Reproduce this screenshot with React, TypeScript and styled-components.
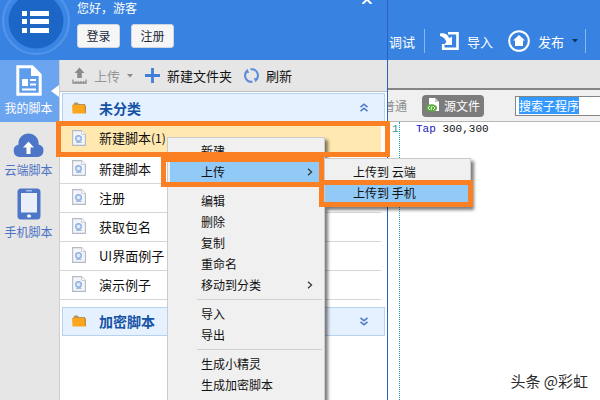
import React, { useEffect, useRef } from "react";
import styled, { createGlobalStyle } from "styled-components";

const orange = "#fb8023";
const blue = "#3883e1";

const GlobalStyle = createGlobalStyle`
  * { box-sizing: border-box; }
  body { margin: 0; overflow: hidden; }
  body, button, input { font-family: "Noto Sans CJK SC", "Noto Sans", sans-serif; font-size: 13px; }
  button { margin: 0; padding: 0; border: 0; background: none; color: inherit; text-align: left; white-space: nowrap; }
  ul { list-style: none; margin: 0; padding: 0; }
  svg { display: block; flex: none; }
`;

const Window = styled.div`
  position: relative;
  display: flex;
  height: 100vh;
  overflow: hidden;
  background: #fff;
  color: #111;
`;

const Panel = styled.aside`
  flex: 0 0 388px;
  display: flex;
  flex-direction: column;
  border-right: 1px solid #2a62bd;
  position: relative;
  z-index: 1;
`;

const PanelHeader = styled.header`
  flex: 0 0 60px;
  display: flex;
  align-items: flex-start;
  padding-left: 2px;
  gap: 7px;
  background: ${blue};
  color: #fff;
`;

const Account = styled.div`
  flex: 1;
  font-size: 12px;
  line-height: 16px;
`;

const AccountButtons = styled.div`
  display: flex;
  gap: 11px;
  margin-top: 8px;
`;

const AccountButton = styled.button`
  width: 43px;
  height: 24px;
  padding-bottom: 1px;
  border-radius: 3px;
  border: 1px solid #cfd6e2;
  background: #f6f6f6;
  color: #1b2a3c;
  font-size: 12px;
  text-align: center;
`;

const CloseButton = styled.button`
  margin-right: 14px;
`;

const PanelBody = styled.div`
  flex: 1;
  display: flex;
  min-height: 0;
`;

const Nav = styled.nav`
  flex: 0 0 60px;
  background: #e6e6e6;
  border-right: 1px solid #cfcfcf;
`;

const NavItem = styled.button<{ $active?: boolean }>`
  position: relative;
  display: flex;
  flex-direction: column;
  align-items: center;
  justify-content: flex-end;
  gap: 3px;
  width: 100%;
  height: 62px;
  padding: 0 2px 5px 0;
  font-size: 12px;
  line-height: 18px;
  background: ${(p) => (p.$active ? "#6ba4ef" : "transparent")};
  color: ${(p) => (p.$active ? "#fff" : "#4d72c4")};
`;

const NavPointer = styled.svg`
  position: absolute;
  right: 0;
  top: 25px;
`;

const Main = styled.main`
  flex: 1;
  min-width: 0;
`;

const Toolbar = styled.div`
  display: flex;
  align-items: center;
  height: 32px;
  padding-left: 12px;
  background: #e6e6e6;
  border-bottom: 1px solid #b9bec4;
`;

const ToolButton = styled.button<{ $muted?: boolean }>`
  display: flex;
  align-items: center;
  gap: 7px;
  margin-right: 12px;
  color: ${(p) => (p.$muted ? "#969696" : "#111")};
`;

const List = styled.div`
  padding: 1px 2px 0 0;
`;

const Category = styled.button<{ $spaced?: boolean }>`
  display: flex;
  align-items: center;
  gap: 13px;
  width: calc(100% - 2px);
  height: ${(p) => (p.$spaced ? 29 : 30)}px;
  margin: ${(p) => (p.$spaced ? 7 : 0)}px 0 0 2px;
  padding: 0 16px 1px 9px;
  border: 1px solid #b5d2ee;
  background: #e5f1fe;
  color: #1553a5;
  font-size: 14px;
  font-weight: 700;
`;

const CategoryName = styled.span`
  flex: 1;
`;

const Row = styled.li<{ $selected?: boolean }>`
  position: relative;
  height: ${(p) => (p.$selected ? 32 : 29)}px;
  margin-right: 4px;
  border-bottom: 1px solid ${(p) => (p.$selected ? "#ffebb4" : "#d6d6d6")};
  background: ${(p) => (p.$selected ? "#ffe9b0" : "#fff")};
`;

const RowButton = styled.button`
  display: flex;
  align-items: center;
  gap: 13px;
  width: 100%;
  height: 100%;
  padding: 0 0 2px 12px;
`;

const Count = styled.small`
  font-size: 12px;
`;

const Frame = styled.span<{ $inset: string }>`
  position: absolute;
  inset: ${(p) => p.$inset};
  z-index: 3;
  border: 5px solid ${orange};
  pointer-events: none;
`;

const Menu = styled.ul`
  position: absolute;
  left: 107px;
  top: 14px;
  z-index: 2;
  width: 158px;
  height: 290px;
  padding: 2px;
  border: 1px solid #cccccc;
  background: #f0f0f0;
  box-shadow: 3px 3px 3px rgba(0, 0, 0, 0.5);
`;

const SubMenu = styled.ul`
  position: absolute;
  left: 154px;
  top: -3px;
  width: 147px;
  padding: 2px 2px 3px 0;
  border: 1px solid #cccccc;
  background: #f0f0f0;
  box-shadow: 3px 3px 3px rgba(0, 0, 0, 0.5);
`;

const MenuItem = styled.li<{ $active?: boolean }>`
  position: relative;
  height: 21px;
  background: ${(p) => (p.$active ? "#91c9f7" : "transparent")};
`;

const MenuButton = styled.button<{ $nested?: boolean }>`
  display: flex;
  align-items: center;
  justify-content: space-between;
  width: 100%;
  height: 100%;
  padding: 0 9px 0 ${(p) => (p.$nested ? 28 : 31)}px;
  font-size: 12px;
`;

const MenuLine = styled.li`
  height: 8px;
  margin-left: 27px;
  padding-top: 4px;
  &::before {
    content: "";
    display: block;
    border-top: 1px solid #cfcfcf;
  }
`;

const Editor = styled.section`
  flex: 1;
  min-width: 0;
  display: flex;
  flex-direction: column;
`;

const EditorHeader = styled.header`
  flex: 0 0 60px;
  display: flex;
  align-items: center;
  padding-top: 22px;
  background: ${blue};
  color: #fff;
`;

const HeaderButton = styled.button`
  display: flex;
  align-items: center;
  gap: 8px;
  margin-left: 1px;
`;

const HeaderLine = styled.span<{ $after?: boolean }>`
  width: 1px;
  height: 24px;
  margin: ${(p) => (p.$after ? "0 14px 0 9px" : "0 0 0 7px")};
  background: #8bb7ef;
`;

const Publish = styled(HeaderButton)`
  margin-left: 15px;
`;

const TabStrip = styled.div`
  flex: 0 0 30px;
  background: #e6e6e6;
  border-bottom: 2px solid #858585;
`;

const EditorBar = styled.div`
  flex: 0 0 32px;
  display: flex;
  align-items: center;
  background: #f0f0f0;
  border-bottom: 1px solid #b8b8b8;
`;

const ModeTab = styled.button`
  display: flex;
  justify-content: flex-end;
  width: 19px;
  overflow: hidden;
  color: #8b8b8b;
  font-size: 12px;
`;

const SourceTab = styled.button`
  display: flex;
  align-items: center;
  gap: 4px;
  height: 22px;
  margin-left: 15px;
  padding: 0 4px;
  border-radius: 4px;
  background: #7c7c7c;
  color: #fff;
  font-size: 12px;
`;

const Search = styled.input`
  flex: 1;
  min-width: 0;
  height: 20px;
  margin-left: 31px;
  padding: 0 3px;
  border: 1px solid #858585;
  border-right: 0;
  outline: 0;
  border-radius: 0;
  background: #fff;
  color: #111;
  font-size: 12px;
  line-height: 14px;
  &::selection { background: #3399ff; color: #fff; }
`;

const Code = styled.div`
  flex: 1;
  display: flex;
  font-family: "Liberation Mono", monospace;
  font-size: 11px;
  line-height: 14px;
`;

const Gutter = styled.div`
  flex: 0 0 12px;
  padding-left: 4px;
  border-right: 1px dotted #1fa0b0;
  color: #2f9090;
`;

const Line = styled.code`
  padding-left: 16px;
  font-family: inherit;
`;

const Keyword = styled.span`
  color: #1717c0;
`;

const Credit = styled.div`
  position: absolute;
  right: 12px;
  bottom: 8px;
  font-size: 15px;
  line-height: 22px;
  color: #2a2a2a;
`;

const Caret = ({ color }: { color: string }) => (
  <svg width="6" height="4" viewBox="0 0 6 4"><path d="M0 0h6L3 3.6z" fill={color} /></svg>
);

const Arrow = () => (
  <svg width="6" height="8" viewBox="0 0 6 8"><path d="M1 .7 4.6 4 1 7.3" fill="none" stroke="#333" strokeWidth="1.2" /></svg>
);

const Logo = () => (
  <svg width="68" height="56" viewBox="0 0 68 56">
    <circle cx="34" cy="21" r="33" fill="#3b86e4" stroke="#5495ea" strokeWidth="2" />
    <circle cx="34" cy="21" r="27.5" fill="#1b66c6" />
    <path d="M20 11h5v5h-5zM20 19h5v5h-5zM20 28h5v5h-5zM28 11h19v5H28zM28 19h19v5H28zM28 28h19v5H28z" fill="#fff" />
  </svg>
);

const FolderIcon = () => (
  <svg width="14" height="12" viewBox="0 0 14 12">
    <path d="M1 3 2.5.5h3L7 2h6v3H1z" fill="#b39462" />
    <path d="M0 3h12.5L14 5l-.5 6.5h-13z" fill="#fba61d" />
    <path d="M12.5 2 14 4v7l-1 .5z" fill="#b98c3e" />
  </svg>
);

const FileIcon = () => (
  <svg width="14" height="16" viewBox="0 0 14 16">
    <path d="M.6.6h9l3.8 3.8v11H.6z" fill="#f3f5f9" stroke="#b4b9c6" strokeWidth="1.1" />
    <path d="M9.6.6v3.8h3.8" fill="#fff" stroke="#c5cad6" />
    <circle cx="6.5" cy="8.500" r="2.800" fill="#dceafb" stroke="#8fb0e2" strokeWidth="1.400" />
    <path d="M4 12.300h5.500" stroke="#8fb0e2" />
  </svg>
);

const Chevrons = ({ down }: { down?: boolean }) => (
  <svg width="8" height="9" viewBox="0 0 8 9">
    <path
      d={down ? "m.5.8 3.5 3 3.5-3M.5 4.8l3.5 3 3.5-3" : "m.5 4.2 3.5-3 3.5 3m-7 4 3.5-3 3.5 3"}
      fill="none" stroke="#4c78c6" strokeWidth="1.6"
    />
  </svg>
);

const ScriptIcon = () => (
  <svg width="26" height="31" viewBox="0 0 26 31">
    <path d="M1.8 1.8h14.5l7.9 8v19.4H1.8z" fill="#5f9cec" stroke="#fff" strokeWidth="3" />
    <path d="M15 1v10h10z" fill="#fff" />
    <path d="M6 14h6v7H6zM14 14h6v2h-6zM14 18.500h6v2h-6zM6 23.500h14v2H6z" fill="#fff" />
  </svg>
);

const CloudIcon = () => (
  <svg width="31" height="25" viewBox="0 0 31 25">
    <path d="M6.500 24a6.300 6.300 0 0 1-1-12.400C5 4.500 10 .5 15.500.5S26 4.500 25.700 11.600A6.300 6.300 0 0 1 24.500 24z" fill="#4d76c8" />
    <path d="m15.500 8.500 5.500 6h-3.500V21h-4v-6.500H10z" fill="#fff" />
  </svg>
);

const PhoneIcon = () => (
  <svg width="24" height="32" viewBox="0 0 24 32">
    <rect x=".5" y=".5" width="23" height="31" rx="3.500" fill="#4d76c8" />
    <path d="M4 5h16v19.500H4z" fill="#e9eef8" />
    <path d="M9 2.800h6" stroke="#cfdcf5" />
    <rect x="10" y="26.500" width="4" height="3" rx="1.500" fill="#fff" />
  </svg>
);

const UploadIcon = () => (
  <svg width="15" height="17" viewBox="0 0 15 17">
    <path d="m7.500.5 5 5.500H9.800v5H5.200V6H2.500z" fill="#8b8b8b" />
    <path d="M1 12.500V16h13v-3.500M4 14v2m2.500-2v2M9 14v2m2.500-2v2" fill="none" stroke="#8b8b8b" strokeWidth="1.300" />
  </svg>
);

const PlusIcon = () => (
  <svg width="15" height="15" viewBox="0 0 15 15"><path d="M7.500 0v15M0 7.500h15" stroke="#3f7fd8" strokeWidth="2.800" /></svg>
);

const RefreshIcon = () => (
  <svg width="15" height="15" viewBox="0 0 15 15">
    <path d="M6.500 1.300A6.200 6.200 0 0 1 12.300 11.500M8.500 13.700A6.200 6.200 0 0 1 2.700 3.500" fill="none" stroke="#5b8bdc" strokeWidth="2" />
    <path d="m9.800 10 4.700.5-3 3.800zM5.200 5 .5 4.500l3-3.800z" fill="#5b8bdc" />
  </svg>
);

const ImportIcon = () => (
  <svg width="19" height="20" viewBox="0 0 19 20">
    <path d="M8 2.200h9.500v15.600H3.200V13" fill="none" stroke="#fff" strokeWidth="2.600" />
    <path d="M0 2.500c5-.7 8 1 9.200 4.700L12 5.500V14H3.800l2.600-3C5.200 7.500 3 5.500 0 5z" fill="#fff" />
  </svg>
);

const PublishIcon = () => (
  <svg width="22" height="22" viewBox="0 0 22 22">
    <circle cx="11" cy="11" r="9.800" fill="none" stroke="#fff" strokeWidth="2" />
    <path d="m11 5 6 5.500h-2V16H7v-5.500H5z" fill="#fff" />
  </svg>
);

const SourceIcon = () => (
  <svg width="14" height="15" viewBox="0 0 14 15">
    <path d="M3 0h6l4 4v9H3z" fill="#fff" />
    <path d="M9 0v4h4z" fill="#c9c9c9" />
    <ellipse cx="5.500" cy="10" rx="5.500" ry="3.800" fill="#5cae3c" />
    <path d="m4 8-2 2 2 2m3-4 2 2-2 2M6 8l-1 4" fill="none" stroke="#e6f6dd" />
  </svg>
);

const menuItems = [
  "新建", "上传", null, "编辑", "删除", "复制", "重命名", "移动到分类", null, "导入", "导出", null, "生成小精灵", "生成加密脚本",
];
const scripts = ["新建脚本", "注册", "获取包名", "UI界面例子", "演示例子"];

const UploadMenu = () => (
  <SubMenu>
    <MenuItem><MenuButton $nested>上传到 云端</MenuButton></MenuItem>
    <MenuItem $active>
      <MenuButton $nested>上传到 手机</MenuButton>
      <Frame $inset="-2px -5px -4px -6px" />
    </MenuItem>
  </SubMenu>
);

const ContextMenu = () => (
  <Menu>
    {menuItems.map((name, i) =>
      name === null ? (
        <MenuLine key={i} role="separator" />
      ) : (
        <MenuItem key={i} $active={name === "上传"}>
          <MenuButton>
            {name}
            {(name === "上传" || name === "移动到分类") && <Arrow />}
          </MenuButton>
          {name === "上传" && (
            <>
              <UploadMenu />
              <Frame $inset="-4px -2px -5px -9px" />
            </>
          )}
        </MenuItem>
      ),
    )}
  </Menu>
);

export default function App() {
  const search = useRef<HTMLInputElement>(null);
  useEffect(() => {
    search.current?.focus();
    search.current?.select();
  }, []);

  return (
    <Window>
      <GlobalStyle />
      <Panel>
        <PanelHeader>
          <Logo />
          <Account>
            您好，游客
            <AccountButtons>
              <AccountButton>登录</AccountButton>
              <AccountButton>注册</AccountButton>
            </AccountButtons>
          </Account>
          <CloseButton aria-label="关闭">
            <svg width="12" height="4" viewBox="0 0 12 4"><path d="M1.500 4 6-.5 10.500 4" fill="none" stroke="#fff" strokeWidth="2" /></svg>
          </CloseButton>
        </PanelHeader>
        <PanelBody>
          <Nav>
            <NavItem $active>
              <ScriptIcon />
              我的脚本
              <NavPointer width="8" height="12" viewBox="0 0 8 12"><path d="M8 0v12L0 6z" fill="#fff" /></NavPointer>
            </NavItem>
            <NavItem><CloudIcon />云端脚本</NavItem>
            <NavItem><PhoneIcon />手机脚本</NavItem>
          </Nav>
          <Main>
            <Toolbar>
              <ToolButton $muted><UploadIcon />上传<Caret color="#8b8b8b" /></ToolButton>
              <ToolButton><PlusIcon />新建文件夹</ToolButton>
              <ToolButton><RefreshIcon />刷新</ToolButton>
            </Toolbar>
            <List>
              <Category><FolderIcon /><CategoryName>未分类</CategoryName><Chevrons /></Category>
              <ul>
                <Row $selected>
                  <RowButton><FileIcon /><span>新建脚本<Count>(1)</Count></span></RowButton>
                  <ContextMenu />
                  <Frame $inset="-2px -9px -3px -4px" />
                </Row>
                {scripts.map((name) => (
                  <Row key={name}><RowButton><FileIcon />{name}</RowButton></Row>
                ))}
              </ul>
              <Category $spaced><FolderIcon /><CategoryName>加密脚本</CategoryName><Chevrons down /></Category>
            </List>
          </Main>
        </PanelBody>
      </Panel>
      <Editor>
        <EditorHeader>
          <HeaderButton>调试</HeaderButton>
          <HeaderLine $after />
          <HeaderButton><ImportIcon />导入</HeaderButton>
          <Publish><PublishIcon />发布<Caret color="#12325f" /></Publish>
          <HeaderLine />
        </EditorHeader>
        <TabStrip />
        <EditorBar>
          <ModeTab>普通</ModeTab>
          <SourceTab><SourceIcon />源文件</SourceTab>
          <Search ref={search} aria-label="搜索子程序" defaultValue="搜索子程序" />
        </EditorBar>
        <Code>
          <Gutter>1</Gutter>
          <Line><Keyword>Tap</Keyword> 300,300</Line>
        </Code>
      </Editor>
      <Credit>头条 @彩虹</Credit>
    </Window>
  );
}
